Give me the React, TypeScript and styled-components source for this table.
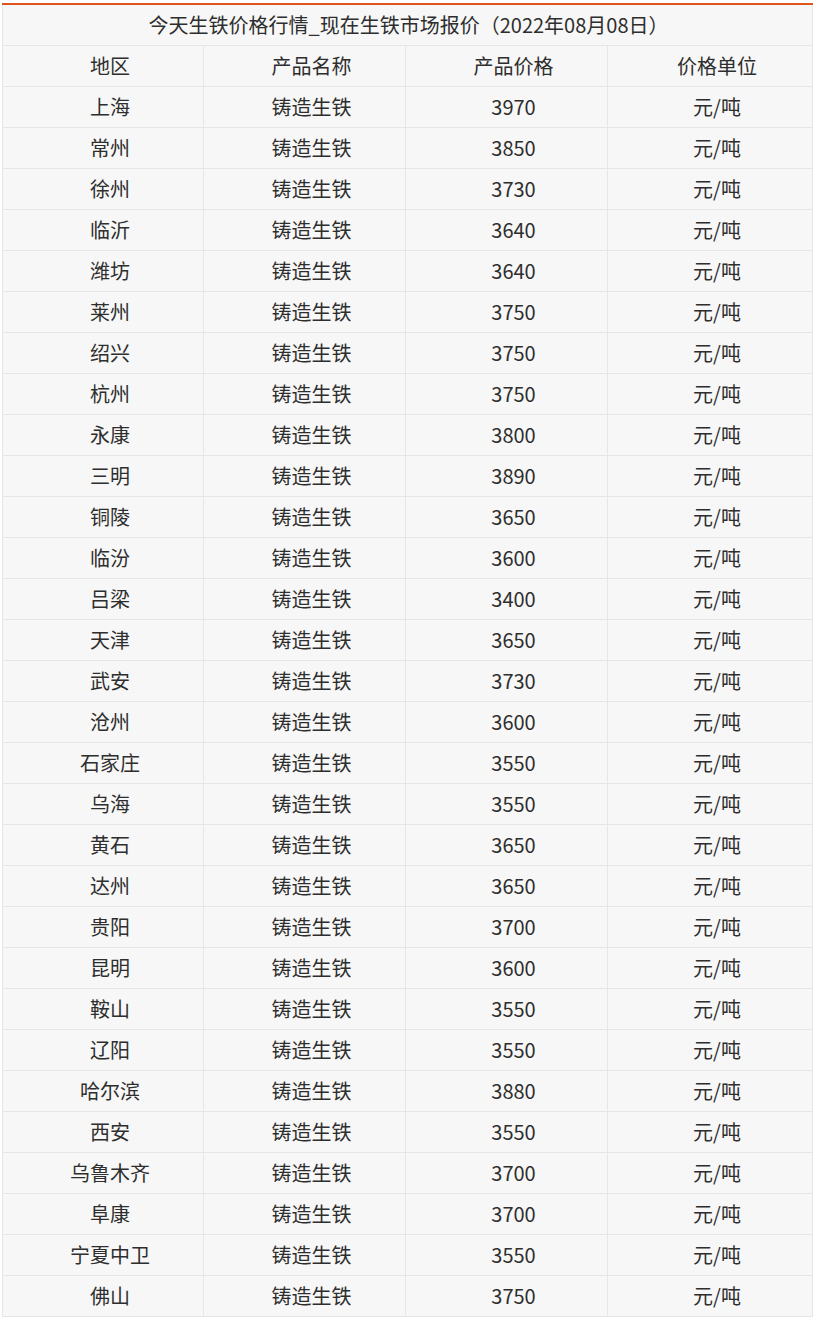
import React from "react";
import styled, { createGlobalStyle } from "styled-components";

const GlobalStyle = createGlobalStyle`
  html, body {
    margin: 0;
    padding: 0;
    background: #ffffff;
  }
  body {
    font-family: "Noto Sans CJK SC", "Noto Sans", sans-serif;
    color: #2e2e2e;
  }
`;

const Page = styled.div`
  padding: 3px 2px 0 2px;
  width: 810px;
`;

const PriceTable = styled.table`
  width: 810px;
  border-collapse: collapse;
  table-layout: fixed;
  background: #f7f7f7;
  border-top: 2px solid #e0531b;
  font-size: 20px;
  line-height: 28px;
  color: #2e2e2e;
`;

const Column = styled.col<{ $w: number }>`
  width: ${(p) => p.$w}px;
`;

const TitleCell = styled.th`
  height: 40px;
  padding: 0 0 0 2px;
  font-weight: normal;
  text-align: center;
  border: 1px solid #e6e6e6;
  border-top: none;
`;

const Cell = styled.td`
  height: 40px;
  padding: 0 0 0 14px;
  text-align: center;
  font-weight: normal;
  border: 1px solid #e6e6e6;
  white-space: nowrap;
`;

const rows: [string, string][] = [
  ["上海", "3970"],
  ["常州", "3850"],
  ["徐州", "3730"],
  ["临沂", "3640"],
  ["潍坊", "3640"],
  ["莱州", "3750"],
  ["绍兴", "3750"],
  ["杭州", "3750"],
  ["永康", "3800"],
  ["三明", "3890"],
  ["铜陵", "3650"],
  ["临汾", "3600"],
  ["吕梁", "3400"],
  ["天津", "3650"],
  ["武安", "3730"],
  ["沧州", "3600"],
  ["石家庄", "3550"],
  ["乌海", "3550"],
  ["黄石", "3650"],
  ["达州", "3650"],
  ["贵阳", "3700"],
  ["昆明", "3600"],
  ["鞍山", "3550"],
  ["辽阳", "3550"],
  ["哈尔滨", "3880"],
  ["西安", "3550"],
  ["乌鲁木齐", "3700"],
  ["阜康", "3700"],
  ["宁夏中卫", "3550"],
  ["佛山", "3750"],
];

export default function App() {
  return (
    <>
      <GlobalStyle />
      <Page>
        <PriceTable>
          <colgroup>
            <Column $w={201} />
            <Column $w={202} />
            <Column $w={202} />
            <Column $w={205} />
          </colgroup>
          <thead>
            <tr>
              <TitleCell colSpan={4}>
                今天生铁价格行情_现在生铁市场报价（2022年08月08日）
              </TitleCell>
            </tr>
          </thead>
          <tbody>
            <tr>
              <Cell>地区</Cell>
              <Cell>产品名称</Cell>
              <Cell>产品价格</Cell>
              <Cell>价格单位</Cell>
            </tr>
            {rows.map(([city, price]) => (
              <tr key={city}>
                <Cell>{city}</Cell>
                <Cell>铸造生铁</Cell>
                <Cell>{price}</Cell>
                <Cell>元/吨</Cell>
              </tr>
            ))}
          </tbody>
        </PriceTable>
      </Page>
    </>
  );
}
